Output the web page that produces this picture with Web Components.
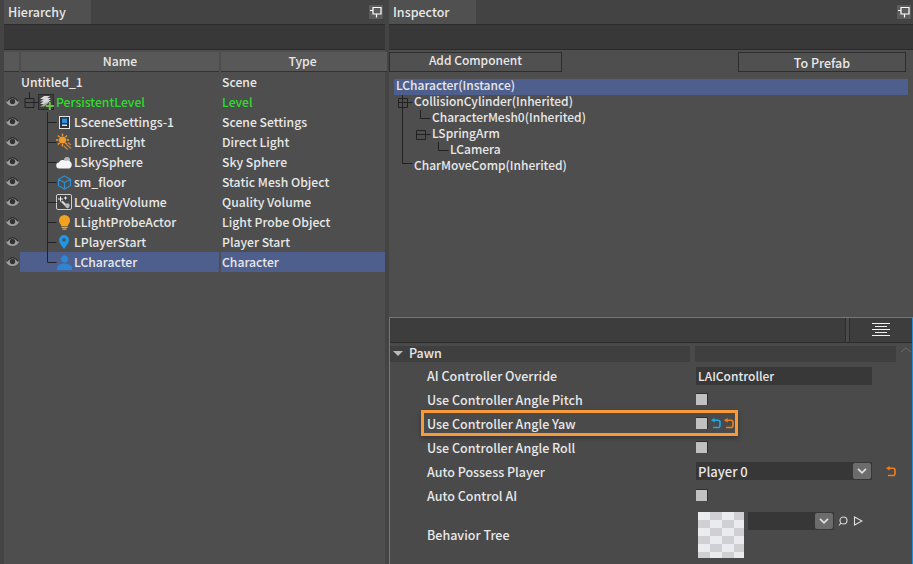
<!DOCTYPE html>
<html>
<head>
<meta charset="utf-8">
<style>
  html, body { margin: 0; height: 100%; overflow: hidden; background: #444; }
  body { font: 500 12.2px "Noto Sans CJK SC", "Noto Sans", sans-serif; color: #e8e8e8; }
</style>
</head>
<body>
<ed-app></ed-app>
<script>
const ICONS = {
  level: `<svg width="16" height="16" viewBox="0 0 16 16"><rect x=".5" y=".5" width="15" height="15" fill="#3f3f3f" stroke="#2b2b2b"/><path d="M2 5l4-3h6L8 5zM2 7.500l5-3.500h6L8 7.500zM2 10l6-4h5L8 10z" fill="#d8d8d8"/><path d="M2 12.500l6-4h3l-5 4z" fill="#aaa"/><path d="M10.800 8h2v3h3v2h-3v3h-2v-3h-3v-2h3z" fill="#6fc04a"/></svg>`,
  settings: `<svg width="11" height="13" viewBox="0 0 11 13"><rect x=".5" y=".5" width="10" height="12" fill="#26323f" stroke="#e6e6e6"/><rect x="3" y="2.500" width="5" height="4.500" fill="#2a8fe0"/><rect x="3" y="8.500" width="5" height="1.500" fill="#ddd"/></svg>`,
  light: `<svg width="16" height="18" viewBox="0 0 16 18"><circle cx="6.500" cy="7" r="3.500" fill="#f29a2e"/><path d="M6.500 .5v2.500M6.500 11v2.500M0 7h2.500M10.500 7H13M2 2.500l1.700 1.700M9.300 9.800L11 11.500M2 11.500l1.700-1.700M9.300 4.200L11 2.500" stroke="#f29a2e" stroke-width="1.400"/><path d="M8 13l3.500 3.500M10.500 11.500l4.500 4M12 9.500l3 2.500" stroke="#c08a50" stroke-width="1.100"/></svg>`,
  sky: `<svg width="16" height="13" viewBox="0 0 16 13"><circle cx="11" cy="4" r="3" fill="#b5b5b5"/><path d="M3.500 12.500a3 3 0 0 1-.5-6A4 4 0 0 1 9.500 5 3 3 0 0 1 13.500 12.500z" fill="#f6f6f6"/></svg>`,
  cube: `<svg width="15" height="15" viewBox="0 0 15 15" fill="none" stroke="#2f8fd0" stroke-width="1.200"><path d="M7.500 1l6 3.300v6.400l-6 3.300-6-3.300V4.300zM1.500 4.300l6 3.300 6-3.300M7.500 7.600V14"/></svg>`,
  quality: `<svg width="16" height="16" viewBox="0 0 16 16"><rect x=".5" y=".5" width="15" height="15" rx="1.500" fill="#454545" stroke="#cfcfcf"/><path d="M4.500 2.500v5M2 5h5M9.500 2.500v3M8 4h3" stroke="#eee"/><path d="M5 8l1.500-1.500 6.500 6.500-1.500 1.500z" fill="#d8d8d8"/><circle cx="11.500" cy="11.500" r="2.200" fill="#b8b8b8"/></svg>`,
  probe: `<svg width="11" height="15" viewBox="0 0 11 15"><path d="M5.500 0a5.500 5.500 0 0 1 5.500 5.500c0 2.500-2 3.500-2.300 5.500H2.300C2 9 0 8 0 5.500A5.500 5.500 0 0 1 5.500 0z" fill="#f3a21f"/><rect x="2.500" y="11.600" width="6" height="1.400" fill="#f3a21f"/><rect x="3.500" y="13.500" width="4" height="1.300" fill="#f3a21f"/></svg>`,
  pin: `<svg width="10" height="14" viewBox="0 0 10 14"><path fill-rule="evenodd" d="M5 0a5 5 0 0 1 5 5c0 3-3 6-5 9-2-3-5-6-5-9a5 5 0 0 1 5-5zm0 3.200a1.800 1.800 0 1 0 0 3.600 1.800 1.800 0 0 0 0-3.600z" fill="#1f96e6"/></svg>`,
  person: `<svg width="15" height="15" viewBox="0 0 15 15"><circle cx="7.500" cy="4" r="3.500" fill="#2f86d0"/><path d="M0 15v-2c0-2 3-4.500 7.500-4.500S15 11 15 13v2z" fill="#2f86d0"/></svg>`,
  eye: `<svg width="13" height="10" viewBox="0 0 13 10"><path d="M0 5C2 2 4 1 6.500 1S11 2 13 5C11 8 9 9 6.500 9S2 8 0 5z" fill="#9f9f9f"/><circle cx="6.500" cy="4.500" r="2.700" fill="#333"/><path d="M.8 4.500C3 1.500 5 .7 6.500.7S10 1.500 12.200 4.500" fill="none" stroke="#2a2a2a" stroke-width="1.100"/></svg>`,
  pinTab: `<svg width="14" height="14" viewBox="0 0 14 14"><rect width="14" height="14" fill="#5c5c5c"/><path d="M4 2.500h8v6.500H4zM4 5.500H1M7.500 9v3.500" fill="none" stroke="#fff" stroke-width="1.200"/></svg>`,
  revert: c => `<svg width="10" height="11" viewBox="0 0 10 11"><path d="M0 2.200L3.600 0v4.400z" fill="${c}"/><path d="M3 2.200h4q2 0 2 2v3q0 2.300-2 2.300H2" fill="none" stroke="${c}" stroke-width="1.600"/></svg>`,
  chevron: `<svg width="10" height="6" viewBox="0 0 10 6" fill="none" stroke="#e0e0e0" stroke-width="1.700"><path d="M1 .8l4 4 4-4"/></svg>`
};

class EdTabBar extends HTMLElement {
  constructor() {
    super();
    this.attachShadow({ mode: "open" });
    this.shadowRoot.innerHTML = `
      <style>
        :host { display: flex; height: 24px; background: #434343; border-bottom: 1px solid #2c2c2c; justify-content: space-between; align-items: center; }
        .tab { height: 24px; width: 87px; box-sizing: border-box; padding: 0 0 2px 4px; display: flex; align-items: center; background: #505050; font-size: 12.5px; }
        .pin { display: flex; margin-right: 2px; }
      </style>
      <div class="tab">${this.getAttribute("label")}</div>
      <div class="pin">${ICONS.pinTab}</div>`;
  }
}
customElements.define("ed-tab-bar", EdTabBar);

class EdSearch extends HTMLElement {
  constructor() {
    super();
    this.attachShadow({ mode: "open" });
    this.shadowRoot.innerHTML = `
      <style>
        :host { display: block; height: 24px; background: #383838; border-bottom: 1px solid #2a2a2a; }
      </style>`;
  }
}
customElements.define("ed-search", EdSearch);

class EdRow extends HTMLElement {
  constructor() {
    super();
    this.attachShadow({ mode: "open" });
    const icon = this.getAttribute("icon");
    const selected = this.hasAttribute("selected");
    const green = this.hasAttribute("green");
    const indent = this.getAttribute("indent") || 0;
    this.shadowRoot.innerHTML = `
      <style>
        :host { display: grid; grid-template-columns: 16px 199px 166px; height: 20px; line-height: 20px; ${green ? "color:#2bdc2b;" : ""} }
        .eye { display: flex; align-items: center; justify-content: center; }
        .name { display: flex; align-items: center; padding-left: ${indent}px; white-space: nowrap; }
        .ic { width: 20px; display: flex; justify-content: center; align-items: center; }
        .type { padding-left: 1px; margin-left: 2px; white-space: nowrap; }
        .sel { background: #4e5f8e; }
      </style>
      <div class="eye">${this.hasAttribute("eye") ? ICONS.eye : ""}</div>
      <div class="name ${selected ? "sel" : ""}">${icon ? `<span class="ic">${ICONS[icon]}</span>` : ""}<span><slot></slot></span></div>
      <div class="type ${selected ? "sel" : ""}">${this.getAttribute("type")}</div>`;
  }
}
customElements.define("ed-row", EdRow);

class EdHierarchy extends HTMLElement {
  constructor() {
    super();
    this.attachShadow({ mode: "open" });
    this.shadowRoot.innerHTML = `
      <style>
        :host { display: block; width: 381px; position: relative; background: #4e4e4e; }
        .head { display: grid; grid-template-columns: 15px 198px 155px 9px; column-gap: 2px; height: 20px; margin-top: 2px; line-height: 19px; text-align: center; }
        .head div { background: #585858; border-bottom: 1px solid #333; }
        .head .t { margin-right: -2px; padding-left: 6px; }
        .lines { position: absolute; left: 0; top: 0; pointer-events: none; }
      </style>
      <ed-tab-bar label="Hierarchy"></ed-tab-bar>
      <ed-search></ed-search>
      <div class="head"><div></div><div>Name</div><div class="t">Type</div><div></div></div>
      <slot></slot>
      <svg class="lines" width="60" height="280" fill="none" stroke="#222">
        <path d="M25.500 92v6M21 98.500h9v9h-9zM21 102.500h9M30 102.500h4"/>
        <path d="M43.500 112v150M43.500 122.500h9M43.500 142.500h9M43.500 162.500h9M43.500 182.500h9M43.500 202.500h9M43.500 222.500h9M43.500 242.500h9M43.500 262.500h9"/>
      </svg>`;
  }
}
customElements.define("ed-hierarchy", EdHierarchy);

class EdComponents extends HTMLElement {
  constructor() {
    super();
    this.attachShadow({ mode: "open" });
    this.shadowRoot.innerHTML = `
      <style>
        :host { display: block; position: relative; height: 267px; box-sizing: border-box; background: #4e4e4e; }
        .btns { display: flex; justify-content: space-between; padding-top: 2px; padding-right: 7px; height: 20px; }
        .btn { box-sizing: border-box; border: 1px solid #2d2d2d; background: #505050; text-align: center; line-height: 14px; font-size: 12px; }
        .add { width: 173px; }
        .pre { width: 168px; line-height: 19px; font-size: 12.5px; }
        .tree { margin: 7px 5px 0 5px; font-size: 12px; }
        .n { height: 16px; line-height: 12px; white-space: nowrap; }
        .sel { background: #4e5f8e; padding-left: 2px; }
        .lines { position: absolute; left: 0; top: 0; }
      </style>
      <div class="btns"><div class="btn add">Add Component</div><div class="btn pre">To Prefab</div></div>
      <div class="tree">
        <div class="n sel">LCharacter(Instance)</div>
        <div class="n" style="padding-left:20px">CollisionCylinder(Inherited)</div>
        <div class="n" style="padding-left:38px">CharacterMesh0(Inherited)</div>
        <div class="n" style="padding-left:38px">LSpringArm</div>
        <div class="n" style="padding-left:56px">LCamera</div>
        <div class="n" style="padding-left:20px">CharMoveComp(Inherited)</div>
      </div>
      <svg class="lines" width="80" height="130" fill="none" stroke="#222">
        <path d="M13.500 45v68.500h10M9.500 48.500h9v9h-9zM9.500 52.500h9M18.500 52.500h5"/>
        <path d="M31.500 60v8.500h10M27.500 80.500h9v9h-9zM27.500 84.500h9M36.500 84.500h5"/>
        <path d="M49.500 92v8.500h10"/>
      </svg>`;
  }
}
customElements.define("ed-components", EdComponents);

class EdProp extends HTMLElement {
  constructor() {
    super();
    this.attachShadow({ mode: "open" });
    const h = this.getAttribute("height") || 24;
    this.shadowRoot.innerHTML = `
      <style>
        :host { display: grid; grid-template-columns: 306px 1fr; height: ${h}px; align-items: center; font-size: 12.5px; }
        .label { padding-left: 37px; white-space: nowrap; }
      </style>
      <div class="label">${this.getAttribute("label")}</div>
      <div><slot></slot></div>`;
  }
}
customElements.define("ed-prop", EdProp);

class EdCheck extends HTMLElement {
  constructor() {
    super();
    this.attachShadow({ mode: "open" });
    this.shadowRoot.innerHTML = `
      <style>
        :host { display: inline-block; width: 12px; height: 12px; box-sizing: border-box; background: #c0c0c0; border-top: 1px solid #2e2e2e; border-right: 1px solid #2e2e2e; vertical-align: 0; }
      </style>`;
  }
}
customElements.define("ed-check", EdCheck);

class EdCombo extends HTMLElement {
  constructor() {
    super();
    this.attachShadow({ mode: "open" });
    const w = this.getAttribute("width");
    this.shadowRoot.innerHTML = `
      <style>
        :host { display: inline-flex; width: ${w}px; height: 18px; background: #373737; justify-content: space-between; align-items: center; box-sizing: border-box; padding: 0 1px 0 2px; font-size: 13px; }
        .b { width: 18px; height: 16px; background: #6c6c6c; border-radius: 2px; display: flex; align-items: center; justify-content: center; }
      </style>
      <span><slot></slot></span>
      <span class="b">${ICONS.chevron}</span>`;
  }
}
customElements.define("ed-combo", EdCombo);

class EdDetails extends HTMLElement {
  constructor() {
    super();
    this.attachShadow({ mode: "open" });
    this.shadowRoot.innerHTML = `
      <style>
        :host { display: block; border: 1px solid #1f8fe0; border-bottom: 0; flex: 1; overflow: hidden; box-sizing: border-box; background: #4a4a4a; }
        .bar { display: flex; height: 24px; gap: 3px; border-bottom: 1px solid #2c2c2c; }
        .bar .f { flex: 1; background: #3d3d3d; border-right: 1px solid #2c2c2c; }
        .bar .m { width: 62px; background: #3d3d3d; border-left: 1px solid #2c2c2c; display: flex; align-items: center; justify-content: center; }
        .sect { display: flex; height: 16px; margin-top: 3px; }
        .sect .l { width: 300px; background: #3f3f3f; display: flex; align-items: center; padding-bottom: 4px; box-sizing: border-box; font-size: 12.5px; }
        .sect .r { width: 201px; margin-left: 5px; background: #3f3f3f; }
        .tri { width: 0; height: 0; border: 5px solid transparent; border-top: 5px solid #bbb; border-bottom: 0; margin: 3px 6px 0 3px; }
        .up { margin-left: 4px; }
        .props { margin-top: 1px; }
        .input { display: inline-block; width: 176px; height: 18px; line-height: 18px; background: #383838; padding-left: 2px; box-sizing: border-box; font-size: 12px; }
        .yaw { position: relative; display: block; }
        .mark { position: absolute; left: 31px; top: -1px; width: 317px; height: 26px; box-sizing: border-box; border: 3px solid #f79a3c; box-shadow: 0 2px 5px rgba(0,0,0,.3); pointer-events: none; }
        .ic { margin-left: 3px; vertical-align: 0; display: inline-block; line-height: 0; }
        .tex { display: flex; gap: 4px; align-items: flex-start; padding-left: 2px; margin-top: 1px; }
        .thumb { width: 46px; height: 46px; background: repeating-conic-gradient(#cfcfd4 0 25%, #eaebef 0 50%) 0 0 / 24px 16px; }
        .small { display: inline-flex; align-items: center; gap: 5px; }
      </style>
      <div class="bar"><div class="f"></div><div class="m"><svg width="18" height="14" viewBox="0 0 18 14"><path d="M0 .5h18M3 3.500h12M0 6.500h18M3 9.500h12M0 12.500h18" stroke="#f0f0f0" fill="none"/></svg></div></div>
      <div class="sect"><div class="l"><span class="tri"></span>Pawn</div><div class="r"></div><svg class="up" width="12" height="8" viewBox="0 0 12 8" fill="none" stroke="#6a6a6a"><path d="M1 6l5-4 5 4"/></svg></div>
      <div class="props">
        <ed-prop label="AI Controller Override"><span class="input">LAIController</span></ed-prop>
        <ed-prop label="Use Controller Angle Pitch"><ed-check></ed-check></ed-prop>
        <div class="yaw"><ed-prop label="Use Controller Angle Yaw"><ed-check></ed-check><span class="ic">${ICONS.revert("#1ea7ec")}</span><span class="ic">${ICONS.revert("#f07f1a")}</span></ed-prop><div class="mark"></div></div>
        <ed-prop label="Use Controller Angle Roll"><ed-check></ed-check></ed-prop>
        <ed-prop label="Auto Possess Player"><ed-combo width="176">Player 0</ed-combo><span class="ic" style="margin-left:14px">${ICONS.revert("#f07f1a")}</span></ed-prop>
        <ed-prop label="Auto Control AI"><ed-check></ed-check></ed-prop>
        <ed-prop label="Behavior Tree" height="54">
          <div class="tex"><div class="thumb"></div>
            <div class="small"><ed-combo width="86"></ed-combo>
              <svg width="10" height="10" viewBox="0 0 10 10" fill="none" stroke="#ddd" stroke-width="1.100" style="margin-left:-1px"><circle cx="5.500" cy="4.500" r="3.500"/><path d="M3 7L1 9.500"/></svg>
              <svg width="10" height="10" viewBox="0 0 10 10" fill="none" stroke="#ddd" stroke-width="1.100"><path d="M1.500 1v8L9 5z"/></svg>
            </div>
          </div>
        </ed-prop>
      </div>`;
  }
}
customElements.define("ed-details", EdDetails);

class EdApp extends HTMLElement {
  constructor() {
    super();
    this.attachShadow({ mode: "open" });
    this.shadowRoot.innerHTML = `
      <style>
        :host { display: flex; height: 564px; gap: 4px; background: #444; padding-left: 4px; }
        .right { flex: 1; display: flex; flex-direction: column; min-width: 0; }
      </style>
      <ed-hierarchy>
        <ed-row type="Scene"><span style="margin-left:1px">Untitled_1</span></ed-row>
        <ed-row eye green type="Level" indent="16" icon="level">PersistentLevel</ed-row>
        <ed-row eye type="Scene Settings" indent="34" icon="settings">LSceneSettings-1</ed-row>
        <ed-row eye type="Direct Light" indent="34" icon="light">LDirectLight</ed-row>
        <ed-row eye type="Sky Sphere" indent="34" icon="sky">LSkySphere</ed-row>
        <ed-row eye type="Static Mesh Object" indent="34" icon="cube">sm_floor</ed-row>
        <ed-row eye type="Quality Volume" indent="34" icon="quality">LQualityVolume</ed-row>
        <ed-row eye type="Light Probe Object" indent="34" icon="probe">LLightProbeActor</ed-row>
        <ed-row eye type="Player Start" indent="34" icon="pin">LPlayerStart</ed-row>
        <ed-row eye selected type="Character" indent="34" icon="person">LCharacter</ed-row>
      </ed-hierarchy>
      <div class="right">
        <ed-tab-bar label="Inspector"></ed-tab-bar>
        <ed-search></ed-search>
        <ed-components></ed-components>
        <ed-details></ed-details>
      </div>`;
  }
}
customElements.define("ed-app", EdApp);
</script>
</body>
</html>
